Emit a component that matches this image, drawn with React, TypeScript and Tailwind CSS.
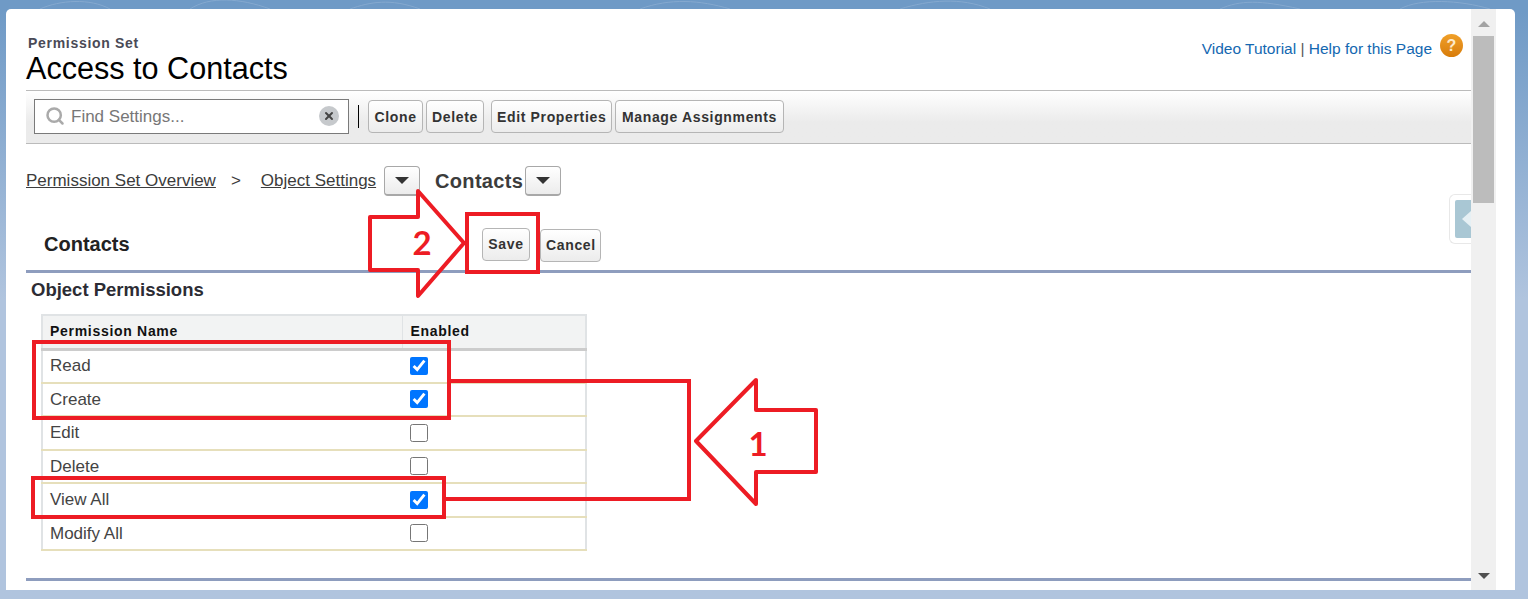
import React from "react";
import { Search, X } from "lucide-react";

const font = "font-['Liberation_Sans',Arial,sans-serif]";

const permissions = [
  { name: "Read", checked: true },
  { name: "Create", checked: true },
  { name: "Edit", checked: false },
  { name: "Delete", checked: false },
  { name: "View All", checked: true },
  { name: "Modify All", checked: false },
];

function Btn({ label, className = "" }: { label: string; className?: string }) {
  return (
    <button
      className={`h-[33px] px-[5px] rounded-[4px] border border-[#b5b5b5] bg-gradient-to-b from-white to-[#ececec] text-[14px] font-bold tracking-[0.65px] text-[#333] whitespace-nowrap ${className}`}
    >
      {label}
    </button>
  );
}

function CaretBtn({ className = "" }: { className?: string }) {
  return (
    <button
      className={`w-[36px] h-[30px] rounded-[4px] border border-[#a8a8a8] border-b-2 bg-gradient-to-b from-white to-[#ececec] flex items-center justify-center ${className}`}
    >
      <span className="w-0 h-0 border-x-[7px] border-x-transparent border-t-[7px] border-t-[#333]" />
    </button>
  );
}

function Annotations() {
  // red marker drawing that sits on top of the page
  return (
    <svg className="absolute left-0 top-0 pointer-events-none" width="1528" height="599" fill="none" stroke="#ed1c24" strokeWidth="4">
      <rect x="467" y="214" width="71" height="58" />
      <polygon points="370,217 418,217 418,191 464,243 418,296 418,270 370,270" strokeLinejoin="round" />
      <rect x="34" y="342" width="415" height="76" />
      <rect x="33" y="478" width="411" height="39" />
      <polyline points="449,381 689,381 689,499 444,499" />
      <polygon points="696,441 756,380 756,410 816,410 816,472 756,472 756,504" strokeLinejoin="round" />
      <text x="422" y="255" textAnchor="middle" fill="#ed1c24" stroke="none" fontSize="33" fontWeight="700" fontFamily="Lato, sans-serif">2</text>
      <text x="758" y="456" textAnchor="middle" fill="#ed1c24" stroke="none" fontSize="33" fontWeight="700" fontFamily="Lato, sans-serif">1</text>
    </svg>
  );
}

export default function App() {
  return (
    <div className={`relative h-[599px] w-full overflow-hidden bg-gradient-to-b from-[#6f9ac6] from-[2%] to-[#b0c4de] to-[50%] pt-[9px] pl-[6px] pr-[13px] ${font}`}>
      {/* faint swirls of the page background */}
      <svg className="absolute left-0 top-0" width="1528" height="9" fill="none" stroke="#85a9cf" strokeWidth="1">
        <path d="M40 9C60 0 90 -2 110 9M190 9C210 -4 240 -2 270 9M350 9C370 2 390 -2 420 9M640 9C670 -2 700 0 730 9M900 9C930 0 960 -3 990 9M1220 9C1240 0 1260 0 1300 9M1400 9C1420 -2 1460 0 1490 9" />
      </svg>

      {/* Card */}
      <div className="relative flex h-[581px] w-[1509px] rounded-t-[5px] bg-white">
        <main className="flex-1 min-w-0 pl-[20px]">
          <header className="flex h-[81px] justify-between pr-[8px]">
            <div className="pt-[26px]">
              <div className="pl-[2px] text-[14px] leading-[16px] font-bold tracking-[0.7px] text-[#4a4a56]">Permission Set</div>
              <h1 className="text-[30.6px] leading-[34px] text-black">Access to Contacts</h1>
            </div>
            <div className="flex items-start gap-[8px] pt-[25px]">
              <div className="pt-[5px] text-[15.5px] leading-[20px] text-[#1468b1]">
                Video Tutorial <span className="text-[#555]">|</span> Help for this Page
              </div>
              <span className="flex h-[23px] w-[23px] items-center justify-center rounded-full bg-gradient-to-b from-[#f0a028] to-[#d87c08] text-[16px] font-bold text-[#fde9c8]">?</span>
            </div>
          </header>

          {/* Toolbar */}
          <div className="flex h-[54px] items-center border-y border-[#bbb] bg-gradient-to-b from-white to-[#ebebeb] to-[60%] pb-[2px] pl-[8px]">
            <div className="flex h-[35px] w-[315px] items-center border border-[#7a7a7a] bg-white pl-[10px] pr-[9px]">
              <Search size={20} strokeWidth={3} className="text-[#aaa]" />
              <span className="ml-[6px] flex-1 pt-[1px] text-[17px] text-[#777]">Find Settings...</span>
              <span className="flex h-[20px] w-[20px] items-center justify-center rounded-full bg-[#c6c9cc]">
                <X size={12} strokeWidth={4} className="text-[#444]" />
              </span>
            </div>
            <div className="ml-[9px] h-[23px] w-px bg-black" />
            <Btn label="Clone" className="ml-[9px] w-[55px] pt-[2px]" />
            <Btn label="Delete" className="ml-[3px] w-[58px] pt-[2px]" />
            <Btn label="Edit Properties" className="ml-[7px] w-[121px] pt-[2px]" />
            <Btn label="Manage Assignments" className="ml-[3px] w-[169px] pt-[2px]" />
          </div>

          {/* Breadcrumb */}
          <div className="flex h-[52px] items-center pt-[22px] text-[17px] text-[#3c3c3c]">
            <a className="underline">Permission Set Overview</a>
            <span className="ml-[15px]">&gt;</span>
            <a className="ml-[20px] underline">Object Settings</a>
            <CaretBtn className="ml-[8px]" />
            <span className="ml-[15px] text-[20px] font-bold tracking-[0.3px] text-[#3c3c3c]">Contacts</span>
            <CaretBtn className="ml-[2px]" />
          </div>

          {/* Contacts section */}
          <section className="mt-[9px] flex h-[68px] items-start border-b-[3px] border-[#8e9dbe] pt-[23px]">
            <h2 className="ml-[18px] w-[438px] text-[20px] leading-[33px] font-bold text-[#222]">Contacts</h2>
            <Btn label="Save" className="w-[48px]" />
            <Btn label="Cancel" className="ml-[10px] mt-[1px] h-[31px] w-[61px]" />
          </section>

          <h3 className="ml-[5px] mt-[5px] text-[18.5px] leading-[24px] font-bold text-[#2c2c34]">Object Permissions</h3>

          <table className="ml-[15px] mt-[12px] w-[546px] table-fixed border-collapse text-[17px]">
            <thead>
              <tr className="h-[34px] border-t-2 border-x-2 border-x-[#e0e3e5] border-t-[#e0e3e5] border-b-[3px] border-b-[#ccc] bg-[#f2f3f3] text-left text-[14px] font-bold tracking-[0.7px] text-[#111]">
                <th className="w-[360px] pl-[7px] font-bold">Permission Name</th>
                <th className="border-l border-[#e0e3e5] pl-[8px] font-bold">Enabled</th>
              </tr>
            </thead>
            <tbody>
              {permissions.map((p) => (
                <tr key={p.name} className="h-[33.5px] border-x-2 border-x-[#e0e3e5] border-b-2 border-b-[#e6dfbb] text-[#444]">
                  <td className="pl-[7px]">{p.name}</td>
                  <td className="pl-[8px]">
                    <input type="checkbox" defaultChecked={p.checked} className="block h-[18px] w-[18px]" />
                  </td>
                </tr>
              ))}
            </tbody>
          </table>

          <div className="mt-[27px] h-[3px] bg-[#8e9dbe]" />
        </main>

        {/* Scrollbar */}
        <div className="flex w-[25px] flex-col items-center bg-[#f0f0f0] pt-[12px]">
          <span className="h-0 w-0 border-x-[6px] border-x-transparent border-b-[6px] border-b-[#a3a3a3]" />
          <div className="mt-[9px] h-[167px] w-[21px] bg-[#bcbcbc]" />
          <span className="mt-[370px] h-0 w-0 border-x-[6px] border-x-transparent border-t-[6px] border-t-[#505050]" />
        </div>
        <div className="w-[19px]" />

        {/* Collapsed side tab */}
        <div className="absolute left-[1443px] top-[185px] flex h-[50px] w-[22px] items-center rounded-l-[6px] border border-r-0 border-[#e8e8e8] bg-white pl-[5px]">
          <div className="flex h-[38px] w-[17px] items-center justify-end rounded-l-[2px] bg-[#a9c7d4] pr-0">
            <span className="h-0 w-0 border-y-[8px] border-y-transparent border-r-[9px] border-r-[#e6f0f4]" />
          </div>
        </div>
      </div>

      <Annotations />
    </div>
  );
}
